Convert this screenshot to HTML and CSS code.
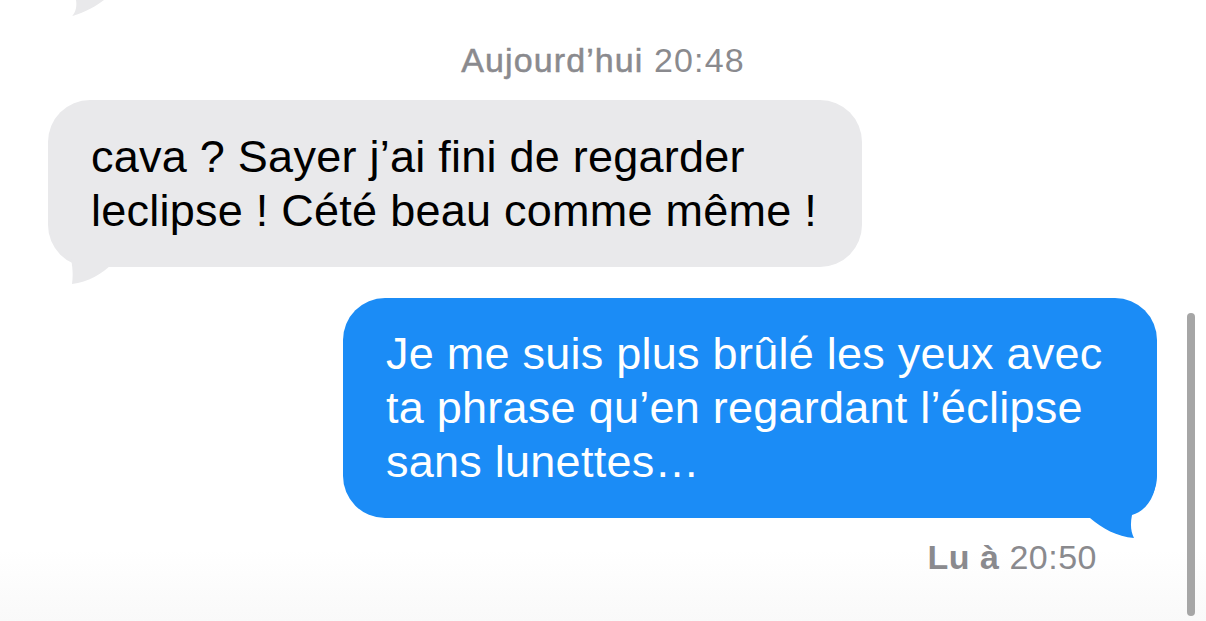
FILE: index.html
```html
<!DOCTYPE html>
<html lang="fr">
<head>
<meta charset="utf-8">
<title>Messages</title>
<link rel="stylesheet" href="styles.css">
</head>
<body>
<div class="thread">
  <svg class="prev-tail" width="130" height="20" viewBox="0 0 130 20">
    <path d="M72,16 C86,12 96,6 104,0 L76,0 C77,6 76,12 72,16 Z" fill="#e9e9eb"/>
  </svg>
  <div class="stamp"><span class="stamp-day">Aujourd’hui</span> 20:48</div>
  <div class="row row-in">
    <div class="bubble bubble-in">
      <p class="text">cava ? Sayer j’ai fini de regarder<br>leclipse ! Cété beau comme même !</p>
      <svg class="tail tail-in" width="90" height="75" viewBox="0 0 90 75">
        <path d="M9,4 C9,28 18,41 31,46 C33,56 33,64 32,71 C48,69 62,61 73,50 L73,4 Z" fill="#e9e9eb"/>
      </svg>
    </div>
  </div>
  <div class="row row-out">
    <div class="bubble bubble-out">
      <p class="text">Je me suis plus brûlé les yeux avec<br>ta phrase qu’en regardant l’éclipse<br>sans lunettes…</p>
      <svg class="tail tail-out" width="90" height="75" viewBox="0 0 90 75">
        <path d="M77,0 C77,25 68,40 52,45 C50,55 51,62 54,68 C37,67 22,58 10,48 L10,0 Z" fill="#1b8cf6"/>
      </svg>
    </div>
  </div>
  <div class="receipt"><span class="receipt-label">Lu à</span> 20:50</div>
</div>
<div class="scrollbar"></div>
</body>
</html>
```
FILE: styles.css
```css
html, body {
  margin: 0;
  padding: 0;
}
body {
  width: 1206px;
  height: 621px;
  overflow: hidden;
  position: relative;
  background: linear-gradient(to bottom, #ffffff 0, #ffffff 550px, #f9f9f9 621px);
  font-family: "Liberation Sans", "Noto Sans", sans-serif;
}
.thread {
  display: flex;
  flex-direction: column;
}
.prev-tail {
  display: block;
}
.stamp {
  margin-top: 20px;
  text-align: center;
  font-size: 34px;
  line-height: 40px;
  color: #8a8a8e;
  letter-spacing: 1.1px;
}
.stamp-day {
  -webkit-text-stroke: 0.5px #8a8a8e;
}
.row {
  display: flex;
}
.row-in {
  margin-top: 20px;
  padding-left: 48px;
}
.row-out {
  margin-top: 31px;
  justify-content: flex-end;
  padding-right: 49px;
}
.bubble {
  position: relative;
  width: 814px;
  box-sizing: border-box;
  border-radius: 42px;
  padding: 0 43px;
  display: flex;
  align-items: center;
}
.bubble-in {
  height: 167px;
  background: #e9e9eb;
  color: #000;
}
.bubble-out {
  height: 220px;
  background: #1b8cf6;
  color: #fff;
}
.text {
  margin: 0;
  font-size: 45px;
  line-height: 54px;
  letter-spacing: 0.25px;
  position: relative;
  z-index: 1;
  white-space: nowrap;
}
.tail {
  position: absolute;
  display: block;
}
.tail-in {
  left: -8px;
  top: 113px;
}
.tail-out {
  left: 737px;
  top: 172px;
}
.receipt {
  margin-top: 19px;
  padding-right: 109px;
  text-align: right;
  font-size: 34px;
  line-height: 40px;
  letter-spacing: 0.5px;
  color: #8a8a8e;
}
.receipt-label {
  font-weight: 700;
}
.scrollbar {
  position: absolute;
  left: 1187px;
  top: 313px;
  width: 8px;
  height: 303px;
  border-radius: 4px;
  background: #a6a6a6;
}
```
